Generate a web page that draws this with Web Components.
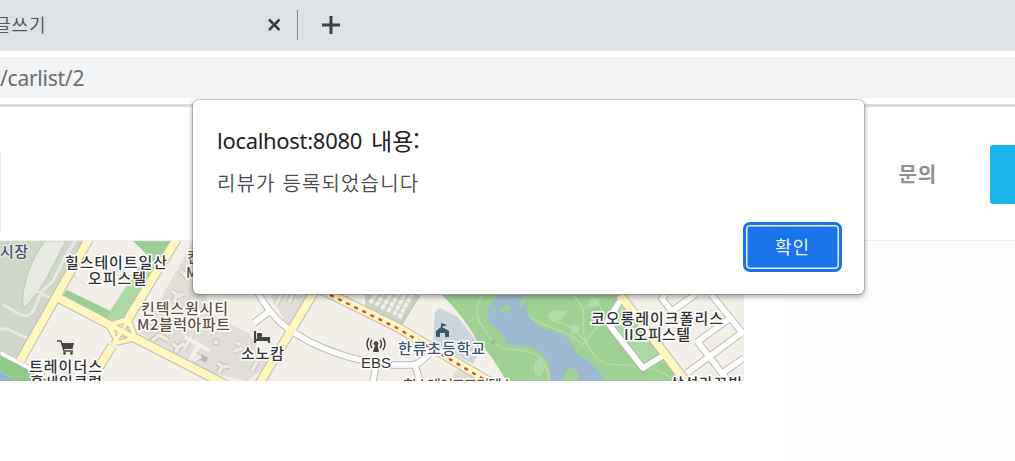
<!DOCTYPE html>
<html lang="ko">
<head>
<meta charset="utf-8">
<title>글쓰기</title>
<style>
  body {
    margin: 0;
    width: 1015px;
    height: 461px;
    overflow: hidden;
    position: relative;
    background: #fff;
    font-family: "Noto Sans", "Noto Sans CJK KR", sans-serif;
  }
</style>
</head>
<body>
<browser-tabs>글쓰기</browser-tabs>
<address-bar>/carlist/2</address-bar>
<site-header>문의</site-header>
<review-page><street-map></street-map></review-page>
<alert-dialog>
  <span slot="host">localhost:8080</span>
  <span slot="title">내용:</span>
  <span slot="message">리뷰가 등록되었습니다</span>
  <span slot="action">확인</span>
</alert-dialog>

<script>
function define(name, html) {
  const template = document.createElement('template');
  template.innerHTML = html;
  customElements.define(name, class extends HTMLElement {
    constructor() {
      super();
      this.attachShadow({ mode: 'open' });
      this.shadowRoot.appendChild(template.content.cloneNode(true));
    }
  });
}

define('browser-tabs', `
<style>
  :host {
    display: flex;
    align-items: center;
    box-sizing: border-box;
    height: 51px;
    background: #dee1e6;
    border-bottom: 1px solid #e8eaed;
  }
  .title {
    width: 266px;
    margin-left: -6px;
    padding-bottom: 3px;
    font: 350 18px/24px "Noto Sans CJK KR", sans-serif;
    letter-spacing: 0.9px;
    color: #50545a;
    white-space: nowrap;
  }
  .line { width: 1px; height: 30px; margin: 0 23px 0 15px; background: #85888d; }
  svg { display: block; fill: none; stroke: #3c4043; }
</style>
<div class="title"><slot></slot></div>
<svg width="22" height="22" viewBox="0 0 22 22"><path d="M9 5.5l10.5 10.5M19.5 5.5L9 16" stroke-width="2.5"/></svg>
<div class="line"></div>
<svg width="20" height="20" viewBox="0 0 20 20"><path d="M10 1v18M1 10h18" stroke-width="3"/></svg>`);

define('address-bar', `
<style>
  :host {
    display: flex;
    box-sizing: border-box;
    height: 56px;
    padding: 6px 0;
    border-bottom: 3px solid #dcdcdc;
    background: #fff;
  }
  .url {
    flex: 1;
    height: 41px;
    background: #f1f3f4;
    font-size: 21px;
    line-height: 42px;
    letter-spacing: -0.25px;
    color: #6b6d70;
  }
</style>
<div class="url"><slot></slot></div>`);

define('site-header', `
<style>
  :host {
    display: flex;
    align-items: center;
    box-sizing: border-box;
    height: 134px;
    border-bottom: 1px solid #eee;
  }
  .edge { width: 1px; height: 80px; margin: 36px auto 0 0; background: #dff4fe; }
  .menu {
    margin-right: 53px;
    font: 700 20px/28px "Noto Sans CJK KR", sans-serif;
    letter-spacing: 0.8px;
    color: #909090;
  }
  .button { width: 25px; height: 59px; margin-top: 2px; border-radius: 3px 0 0 3px; background: #1ab3ea; }
</style>
<div class="edge"></div>
<div class="menu"><slot></slot></div>
<div class="button"></div>`);

define('review-page', `
<style>
  :host { display: flex; justify-content: space-between; height: 220px; }
  .side { width: 231px; background: #fcfcfc; }
</style>
<slot></slot>
<div class="side"></div>`);

define('street-map', `
<style>
  :host { display: block; width: 744px; height: 140px; }
  svg { display: block; }
  path { fill: none; stroke-linejoin: round; }
  .edge { stroke: #bdbdb4; }
  .yellow { stroke: #fdf6bd; }
  .white { stroke: #fff; }
  .a { stroke-width: 10; }
  .yellow.a { stroke-width: 8; }
  .b { stroke-width: 7.5; }
  .white.b { stroke-width: 5.5; }
  .lane { stroke: #e7e8e3; stroke-width: 3; stroke-linecap: round; }
  .trail { stroke: #b3dbab; stroke-width: 1.4; }
  text {
    font-family: "Noto Sans CJK KR", sans-serif;
    font-size: 15px;
    font-weight: 500;
    fill: #333;
    stroke: #fff;
    stroke-width: 3px;
    stroke-linejoin: round;
    paint-order: stroke;
  }
  .apt { fill: #63513f; }
  .school { fill: #3f5672; }
  .hall { fill: #465172; stroke: #e3e7e0; }
  .small { font-size: 14px; }
</style>
<svg width="744" height="140" viewBox="0 241 744 140">
  <rect y="241" width="744" height="140" fill="#f2efe9"/>

  <!-- exhibition grounds -->
  <path d="M0 241H88L18 363L0 353Z" style="fill:#d0d7c9"/>
  <path d="M45 241H66C53 264 45 288 24 308C20 302 25 266 45 241Z" style="fill:#e5e9e2;stroke:#bfc7ba"/>
  <path class="lane" d="M75 241L63 261L53 281L41 292L36 305C32 317 25 317 19 314L4 305M37 291L52 299M64 257L74 262M0 329L7 329L27 338"/>
  <path d="M0 350L45 374L38 381L0 359Z" style="fill:#fff;stroke:#c9c9c4"/>
  <path d="M0 355L50 381H16L0 371Z" style="fill:#91c98b"/>
  <path d="M0 371L16 381H0Z" style="fill:#91b4d0"/>
  <path d="M67 290L110 311L147 255L133 241H174L127 319L110 320L62 297Z" style="fill:#addaa4"/>
  <path d="M67 290L110 311L107 318L62 297ZM133 241H170L160 255L147 253Z" style="fill:#9ad094"/>
  <path class="lane" d="M74 276L87 286"/>

  <!-- apartment blocks -->
  <path d="M193 241L141 334L215 374L247 381L268 365L250 334L208 312L200 241Z" style="fill:#e1ded8"/>
  <path d="M270 295H307L288 326Z" style="fill:#e1ded8"/>
  <path d="M172 291L178 296L184 294M177 296L173 302M172 343L178 348L184 343M178 348L175 353M194 353L199 358M191 336L184 350M148 344L159 335L168 340M195 355L207 360M193 361L201 356M218 363L223 367L229 366M222 367L219 372M236 342L241 345M234 351L243 348M257 361L252 371M276 305L282 293M289 303L293 293M181 271L187 277" style="stroke:#b9b6b0;stroke-width:5.5"/>
  <path d="M172 291L178 296L184 294M177 296L173 302M172 343L178 348L184 343M178 348L175 353M194 353L199 358M191 336L184 350M148 344L159 335L168 340M193 361L201 356M218 363L223 367L229 366M222 367L219 372M236 342L241 345M234 351L243 348M257 361L252 371M276 305L282 293M289 303L293 293M181 271L187 277" style="stroke:#eceae5;stroke-width:4"/>
  <path d="M185 337L210 351M199 345L190 360" style="stroke:#f1efeb;stroke-width:4"/>
  <circle cx="216" cy="342" r="3" fill="#f0eee9" stroke="#c5c2bc"/>

  <!-- car park -->
  <path d="M365 295H420L401 327L365 311Z" style="fill:#cbd2c3"/>
  <path d="M370 303L377 293M376 306L385 292M382 309L392 292M388 312L399 292M394 315L406 292M399 318L412 294" style="stroke:#eef0eb;stroke-width:4;stroke-dasharray:5 1"/>
  <path d="M401 325L420 295" style="stroke:#b9bdb4"/>

  <!-- lake park -->
  <path d="M442 295H622L687 381H507C499 370 490 351 477 341C469 325 456 309 442 295Z" style="fill:#9dd092"/>
  <path d="M621 300L607 322L643 368L663 356L620 299Z" style="fill:#acd9a5"/>
  <path class="trail" d="M482 295C474 307 475 318 487 333C495 347 503 350 517 350C535 351 547 357 549 381M466 324L476 317M556 322C578 326 584 341 594 355M574 295L583 309L584 335C590 353 598 366 619 365C638 364 658 367 675 381M528 315C545 330 560 326 575 340M592 302C604 302 598 313 608 319M583 309L602 298M570 332L582 345M582 345L600 324"/>
  <path d="M497 295H526C529 302 525 307 528 315C537 327 546 331 555 332C572 335 571 346 577 354C585 360 598 363 604 381H550C552 369 548 357 537 350C525 344 515 347 505 343C507 333 493 329 488 318C485 309 493 304 497 295Z" style="fill:#9db9d1"/>
  <path d="M491 306L497 310L492 313ZM500 308L507 304L512 308L508 313L501 312ZM519 305L522 297L527 295L525 303L521 309Z" style="fill:#9dd092"/>
  <path d="M562 381C565 375 565 368 571 368C578 369 580 376 577 381Z" style="fill:#9dd092"/>
  <g fill="#b1dba8"><circle cx="575" cy="329" r="4"/><ellipse cx="539" cy="368" rx="5" ry="9"/><path d="M548 316L552 310L567 311L561 320L551 322Z" style="fill:#b1dba8"/><circle cx="594" cy="303" r="5"/></g>
  <path d="M440 308L435 312L433 343L473 364L481 348L458 317Z" style="fill:#cbd5dc"/>
  <circle cx="493" cy="342" r="1.5" fill="#ccd5c5" stroke="#899b83"/>
  <path d="M454 373L462 368L476 378L475 381H452Z" style="fill:#e0ddd7"/>

  <!-- streets -->
  <g class="edge">
    <path class="b" d="M258 293C275 323 290 331 312 343C340 356 360 361 389 365H413Q422 363 432 350M254 323L270 311M415 365L420 381M376 365L373 382"/>
    <path class="b" d="M620 301L607 322L643 368L664 355M711 294L744 335M744 331L687 373M744 358L721 374M697 342L732 317M697 341L728 381M672 311L662 299L665 294M672 311L696 294"/>
    <path class="a" d="M90 237L20 361M55 296L112 326M178 237L128 319M112 346L87 387M135 338L205 374L230 387M314 292L258 386M322 290L397 327L490 382M620 295L690 387"/>
    <path d="M108 324L118 342L135 338L128 319L110 325L135 338M128 319L114 344" style="stroke-width:7"/>
  </g>
  <path class="white b" d="M258 293C275 323 290 331 312 343C340 356 360 361 389 365H413Q422 363 432 350M254 323L270 311M415 365L420 381M376 365L373 382"/>
  <path class="white b" d="M620 301L607 322L643 368L664 355M711 294L744 335M744 331L687 373M744 358L721 374M697 342L732 317M697 341L728 381M672 311L662 299L665 294M672 311L696 294"/>
  <path class="yellow a" d="M90 237L20 361M55 296L112 326M178 237L128 319M112 346L87 387M135 338L205 374L230 387M314 292L258 386M322 290L397 327L490 382M620 295L690 387"/>
  <path class="yellow" d="M108 324L118 342L135 338L128 319L110 325L135 338M128 319L114 344" style="stroke-width:5"/>
  <path d="M118 325L124 324L122 328ZM127 328L129 327L131 333ZM119 340L121 336L127 338ZM115 330L118 332L116 336Z" style="fill:#eee9d9;stroke:#bdbaa5;stroke-width:.8"/>
  <path d="M322 291L397 328L490 383" style="stroke:#d94e42;stroke-width:2.4;stroke-dasharray:4 5"/>

  <!-- place icons -->
  <path d="M57 341H61L64 351H73" style="stroke:#444;stroke-width:1.4"/>
  <path d="M61.5 343H74L72.5 349H63.5Z" style="fill:#444"/>
  <g fill="#444">
    <circle cx="64.5" cy="353.3" r="1.4"/><circle cx="71.5" cy="353.3" r="1.4"/>
    <path d="M255 331V343M255 340H269V343" style="stroke:#444;stroke-width:2.2"/>
    <path d="M257 337H270V341H257Z" style="fill:#444"/><rect x="257" y="333" width="5" height="4" rx="1"/>
    <circle cx="376" cy="343.5" r="2.3"/><path d="M375.7 345H377L378.5 351.5H373.5Z" style="fill:#444;stroke:#444;stroke-width:1"/>
    <path d="M372 340Q369 344 372 348M369 338Q365 344 369 350M380 340Q383 344 380 348M383 338Q387 344 383 350" style="stroke:#444;stroke-width:1.4"/>
  </g>
  <path d="M436 337V331L441 327V323L447 325L442 327L449 331V337H445V333H440V337Z" style="fill:#3f5672"/>

  <!-- place names -->
  <text class="hall" x="0" y="257" textLength="28">시장</text>
  <text x="65" y="268" textLength="102">힐스테이트일산</text>
  <text x="88" y="284" textLength="58">오피스텔</text>
  <text class="apt small" x="187" y="262">킨</text>
  <text class="apt small" x="186" y="278">M1</text>
  <text class="apt" x="141" y="314" textLength="87">킨텍스원시티</text>
  <text class="apt" x="137" y="330" textLength="93">M2블럭아파트</text>
  <text x="29" y="372" textLength="73">트레이더스</text>
  <text x="30" y="388" textLength="72">홀세일클럽</text>
  <text x="241" y="359" textLength="43">소노캄</text>
  <text x="361" y="368" textLength="30" style="font-family:'Liberation Sans'">EBS</text>
  <text class="school" x="398" y="354" textLength="87">한류초등학교</text>
  <text class="apt" x="403" y="391" textLength="111">힐스레이크프리텔스</text>
  <text x="591" y="324" textLength="132">코오롱레이크폴리스</text>
  <text x="624" y="340" textLength="66">II오피스텔</text>
  <text x="670" y="389" textLength="72">삼성라끄빌</text>
</svg>`);

define('alert-dialog', `
<style>
  :host {
    position: absolute;
    left: 193px;
    top: 100px;
    box-sizing: border-box;
    display: flex;
    flex-direction: column;
    width: 671px;
    height: 194px;
    padding: 23px 22px 22px 24px;
    border-radius: 6px;
    background: #fff;
    box-shadow: 0 0 0 1px rgba(0, 0, 0, .14), 0 2px 5px 1px rgba(0, 0, 0, .32);
  }
  .title {
    display: flex;
    gap: 9px;
    height: 34px;
    font-size: 22px;
    line-height: 34px;
    color: #202124;
    letter-spacing: -0.3px;
    white-space: nowrap;
  }
  .subject { font-family: "Noto Sans CJK KR", sans-serif; font-size: 23px; letter-spacing: 0; }
  .message {
    margin-top: 12px;
    font: 350 20px/28px "Noto Sans CJK KR", sans-serif;
    color: #4a4c50;
    letter-spacing: 1.15px;
    white-space: nowrap;
  }
  button {
    align-self: flex-end;
    box-sizing: border-box;
    width: 99px;
    height: 50px;
    margin-top: auto;
    padding: 0 0 3px;
    border: 3px solid #1a73e8;
    border-radius: 7px;
    background: #1a73e8;
    box-shadow: inset 0 0 0 1.5px #e8f1fd;
    color: #e8f0fe;
    font: 400 18px/38px "Noto Sans CJK KR", sans-serif;
    letter-spacing: 1px;
  }
</style>
<div class="title"><slot name="host"></slot><div class="subject"><slot name="title"></slot></div></div>
<div class="message"><slot name="message"></slot></div>
<button><slot name="action"></slot></button>`);
</script>
</body>
</html>
